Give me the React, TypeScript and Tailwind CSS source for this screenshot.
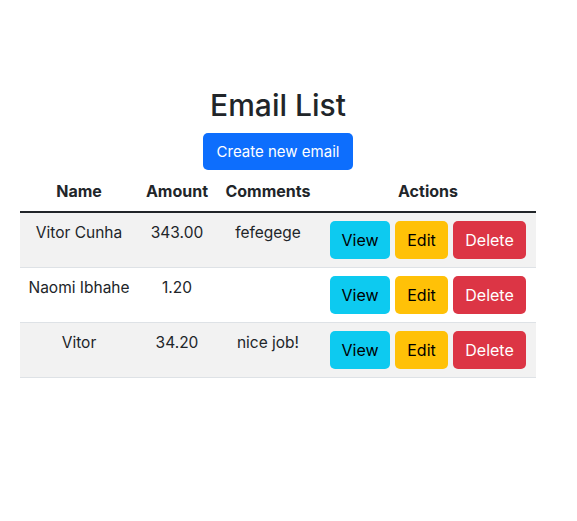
import React from "react";

const rows = [
  { name: "Vitor Cunha", amount: "343.00", comments: "fefegege" },
  { name: "Naomi Ibhahe", amount: "1.20", comments: "" },
  { name: "Vitor", amount: "34.20", comments: "nice job!" },
];

export default function App() {
  return (
    <div
      className="w-[577px] h-[521px] bg-white text-[#212529] pt-[85px] pl-[20px]"
      style={{ fontFamily: "Inter, 'Liberation Sans', sans-serif" }}
    >
      <div className="w-[516px]">
        <h1 className="text-center text-[30px] leading-[40px] font-medium mb-[8px]">Email List</h1>
        <div className="flex justify-center">
          <button className="h-[37px] w-[150px] rounded-[5px] bg-[#0d6efd] text-white text-[15px] leading-[24px]">
            Create new email
          </button>
        </div>
        <table className="w-[516px] mt-[1px] table-fixed border-collapse align-top text-[15.5px] leading-[24px]">
          <colgroup>
            <col className="w-[118px]" />
            <col className="w-[78px]" />
            <col className="w-[104px]" />
            <col className="w-[216px]" />
          </colgroup>
          <thead>
            <tr className="border-b-2 border-[#212529] text-[16px]">
              <th className="py-[8px] font-bold text-center">Name</th>
              <th className="py-[8px] font-bold text-center">Amount</th>
              <th className="py-[8px] font-bold text-center">Comments</th>
              <th className="py-[8px] font-bold text-center">Actions</th>
            </tr>
          </thead>
          <tbody>
            {rows.map((r, i) => (
              <tr
                key={i}
                className={`border-b border-[#dee2e6] align-top ${i % 2 === 0 ? "bg-[#f2f2f2]" : "bg-white"}`}
              >
                <td className="py-[8px] text-center align-top">{r.name}</td>
                <td className="py-[8px] text-center align-top">{r.amount}</td>
                <td className="py-[8px] text-center align-top">{r.comments}</td>
                <td className="py-[8px] align-top">
                  <div className="flex justify-center gap-[5px]">
                    <button className="h-[38px] w-[60px] rounded-[5px] bg-[#0dcaf0] text-black text-[16px]">View</button>
                    <button className="h-[38px] w-[53px] rounded-[5px] bg-[#ffc107] text-black text-[16px]">Edit</button>
                    <button className="h-[38px] w-[73px] rounded-[5px] bg-[#dc3545] text-white text-[16px]">Delete</button>
                  </div>
                </td>
              </tr>
            ))}
          </tbody>
        </table>
      </div>
    </div>
  );
}
